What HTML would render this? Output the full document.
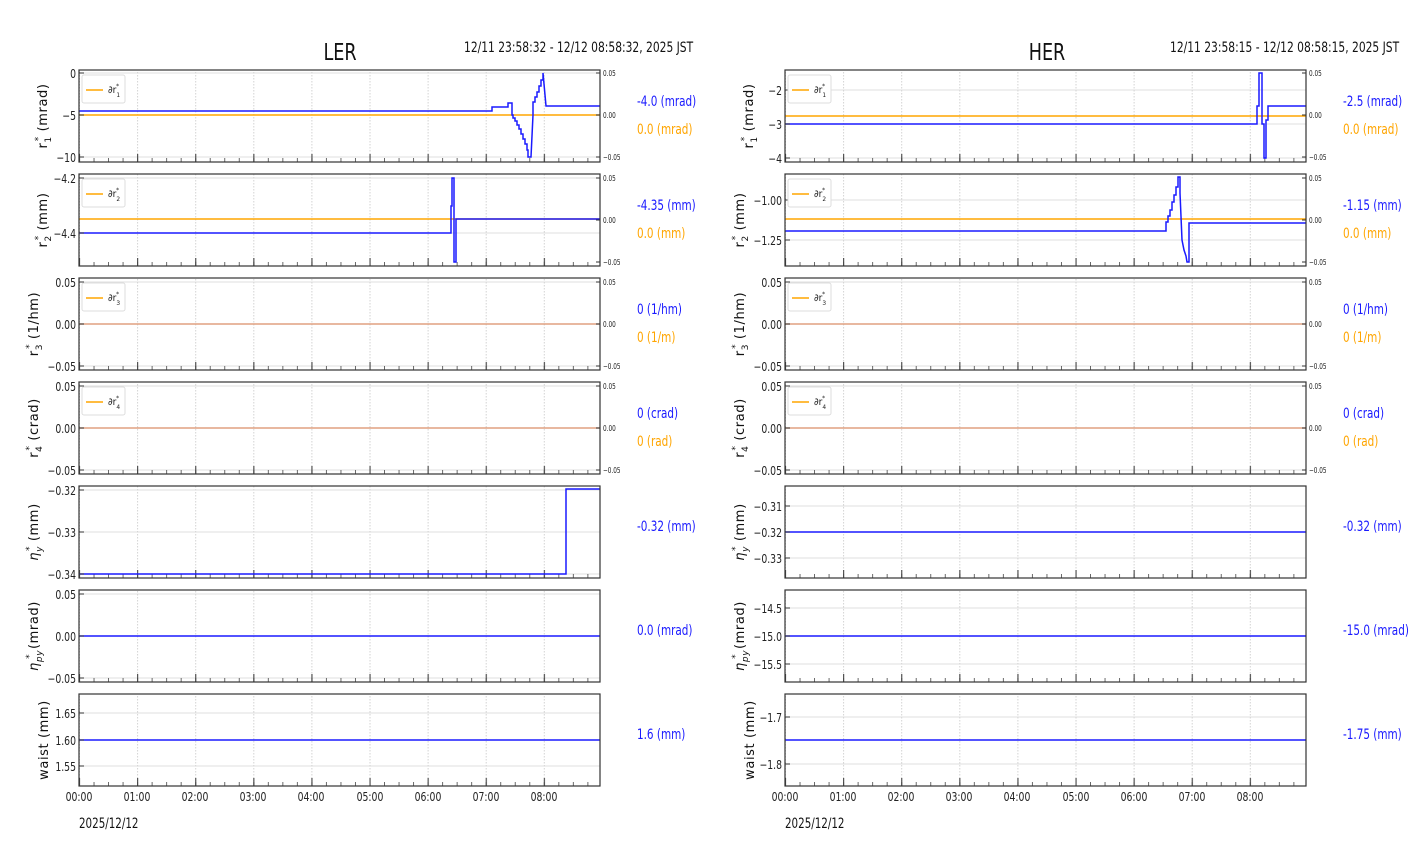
<!DOCTYPE html>
<html><head><meta charset="utf-8"><style>
html,body{margin:0;padding:0;background:#fff;}
svg{display:block;font-family:"DejaVu Sans Condensed","Liberation Sans Narrow","Liberation Sans",sans-serif;}
g.t{font-size:12px;fill:#222;}
g.t>text{transform:scaleX(.86);transform-box:fill-box;transform-origin:right;}
g.tc{font-size:12px;fill:#222;}
g.tc>text{transform:scaleX(.86);transform-box:fill-box;transform-origin:center;}
g.s{font-size:7.5px;fill:#222;}
g.s>text{transform:scaleX(.85);transform-box:fill-box;transform-origin:left;}
.yl{font-family:"DejaVu Sans",sans-serif;font-size:13px;fill:#111;}
.b{font-size:14.5px;fill:#1a1aff;transform:scaleX(.8);transform-box:fill-box;transform-origin:left;}
.o{font-size:14.5px;fill:#ffa500;transform:scaleX(.8);transform-box:fill-box;transform-origin:left;}
.dt{font-size:14px;fill:#111;transform:scaleX(.85);transform-box:fill-box;transform-origin:right;}
.hd{font-size:23px;fill:#111;transform:scaleX(.85);transform-box:fill-box;transform-origin:center;}
.dd{font-size:14px;fill:#111;transform:scaleX(.82);transform-box:fill-box;transform-origin:left;}
</style></head><body>
<svg width="1412" height="864" viewBox="0 0 1412 864" xmlns="http://www.w3.org/2000/svg">
<defs>
<pattern id="gL" x="79" y="0" width="58.1" height="864" patternUnits="userSpaceOnUse"><line x1="0.5" y1="0" x2="0.5" y2="864" stroke="#c8c8c8" stroke-width="0.8" stroke-dasharray="1.5,1.5"/></pattern>
<pattern id="gR" x="785" y="0" width="58.1" height="864" patternUnits="userSpaceOnUse"><line x1="0.5" y1="0" x2="0.5" y2="864" stroke="#c8c8c8" stroke-width="0.8" stroke-dasharray="1.5,1.5"/></pattern>
<pattern id="mjL" x="79" y="70" width="58.1" height="104" patternUnits="userSpaceOnUse"><line x1="0.5" y1="84" x2="0.5" y2="92" stroke="#444" stroke-width="1.2"/></pattern>
<pattern id="mnL" x="79" y="70" width="14.525" height="104" patternUnits="userSpaceOnUse"><line x1="0.5" y1="88" x2="0.5" y2="92" stroke="#444" stroke-width="0.8"/></pattern>
<pattern id="mjR" x="785" y="70" width="58.1" height="104" patternUnits="userSpaceOnUse"><line x1="0.5" y1="84" x2="0.5" y2="92" stroke="#444" stroke-width="1.2"/></pattern>
<pattern id="mnR" x="785" y="70" width="14.525" height="104" patternUnits="userSpaceOnUse"><line x1="0.5" y1="88" x2="0.5" y2="92" stroke="#444" stroke-width="0.8"/></pattern>
</defs>

<g>
<rect x="79" y="70" width="521" height="92" fill="url(#gL)"/><rect x="79" y="174" width="521" height="92" fill="url(#gL)"/><rect x="79" y="278" width="521" height="92" fill="url(#gL)"/><rect x="79" y="382" width="521" height="92" fill="url(#gL)"/><rect x="79" y="486" width="521" height="92" fill="url(#gL)"/><rect x="79" y="590" width="521" height="92" fill="url(#gL)"/><rect x="79" y="694" width="521" height="92" fill="url(#gL)"/>
<rect x="785" y="70" width="521" height="92" fill="url(#gR)"/><rect x="785" y="174" width="521" height="92" fill="url(#gR)"/><rect x="785" y="278" width="521" height="92" fill="url(#gR)"/><rect x="785" y="382" width="521" height="92" fill="url(#gR)"/><rect x="785" y="486" width="521" height="92" fill="url(#gR)"/><rect x="785" y="590" width="521" height="92" fill="url(#gR)"/><rect x="785" y="694" width="521" height="92" fill="url(#gR)"/>
</g>
<g stroke="#d4d4d4" stroke-width="0.8">
<line x1="79" x2="600" y1="73" y2="73"/><line x1="79" x2="600" y1="115" y2="115"/><line x1="79" x2="600" y1="157" y2="157"/>
<line x1="79" x2="600" y1="178" y2="178"/><line x1="79" x2="600" y1="233" y2="233"/>
<line x1="79" x2="600" y1="282" y2="282"/><line x1="79" x2="600" y1="324" y2="324"/><line x1="79" x2="600" y1="366" y2="366"/>
<line x1="79" x2="600" y1="386" y2="386"/><line x1="79" x2="600" y1="428" y2="428"/><line x1="79" x2="600" y1="470" y2="470"/>
<line x1="79" x2="600" y1="490" y2="490"/><line x1="79" x2="600" y1="532" y2="532"/><line x1="79" x2="600" y1="574" y2="574"/>
<line x1="79" x2="600" y1="594" y2="594"/><line x1="79" x2="600" y1="636" y2="636"/><line x1="79" x2="600" y1="678" y2="678"/>
<line x1="79" x2="600" y1="713" y2="713"/><line x1="79" x2="600" y1="740" y2="740"/><line x1="79" x2="600" y1="766" y2="766"/>
<line x1="785" x2="1306" y1="90" y2="90"/><line x1="785" x2="1306" y1="124" y2="124"/><line x1="785" x2="1306" y1="158" y2="158"/>
<line x1="785" x2="1306" y1="200" y2="200"/><line x1="785" x2="1306" y1="240" y2="240"/>
<line x1="785" x2="1306" y1="282" y2="282"/><line x1="785" x2="1306" y1="324" y2="324"/><line x1="785" x2="1306" y1="366" y2="366"/>
<line x1="785" x2="1306" y1="386" y2="386"/><line x1="785" x2="1306" y1="428" y2="428"/><line x1="785" x2="1306" y1="470" y2="470"/>
<line x1="785" x2="1306" y1="506" y2="506"/><line x1="785" x2="1306" y1="532" y2="532"/><line x1="785" x2="1306" y1="558" y2="558"/>
<line x1="785" x2="1306" y1="608" y2="608"/><line x1="785" x2="1306" y1="636" y2="636"/><line x1="785" x2="1306" y1="664" y2="664"/>
<line x1="785" x2="1306" y1="717" y2="717"/><line x1="785" x2="1306" y1="764" y2="764"/>
</g>
<rect x="79" y="70" width="521" height="716" fill="url(#mnL)"/><rect x="79" y="70" width="521" height="716" fill="url(#mjL)"/>
<rect x="785" y="70" width="521" height="716" fill="url(#mnR)"/><rect x="785" y="70" width="521" height="716" fill="url(#mjR)"/>

<g fill="none" stroke-width="1.5">
<line x1="79" x2="600" y1="115" y2="115" stroke="#ffa500"/>
<path d="M79 111H492V107H508V103H512V115H513V118H515V121H517V125H519V129H521V134H523V139H525V144H527V150H528V157H531L533 115V102H535V97H537V92H539V86H541V80H543V73L546 106H600" stroke="#1a1aff"/>
<line x1="79" x2="600" y1="219" y2="219" stroke="#ffa500"/>
<path d="M79 233H451V206H452V178H454V262H456V219H600" stroke="#1a1aff"/>
<line x1="79" x2="600" y1="324" y2="324" stroke="#e0a080"/>
<line x1="79" x2="600" y1="428" y2="428" stroke="#e0a080"/>
<path d="M79 574H566V489H600" stroke="#1a1aff"/>
<line x1="79" x2="600" y1="636" y2="636" stroke="#1a1aff"/>
<line x1="79" x2="600" y1="740" y2="740" stroke="#1a1aff"/>
<line x1="785" x2="1306" y1="116" y2="116" stroke="#ffa500"/>
<path d="M785 124H1257V106H1259V73H1262V124H1264V158H1266V120H1268V106H1306" stroke="#1a1aff"/>
<line x1="785" x2="1306" y1="219" y2="219" stroke="#ffa500"/>
<path d="M785 231H1166V222H1168V216H1170V210H1172V202H1174V195H1176V187H1178V177H1180V193L1182 240L1184 250L1186 256L1187 262H1189V223H1306" stroke="#1a1aff"/>
<line x1="785" x2="1306" y1="324" y2="324" stroke="#e0a080"/>
<line x1="785" x2="1306" y1="428" y2="428" stroke="#e0a080"/>
<line x1="785" x2="1306" y1="532" y2="532" stroke="#1a1aff"/>
<line x1="785" x2="1306" y1="636" y2="636" stroke="#1a1aff"/>
<line x1="785" x2="1306" y1="740" y2="740" stroke="#1a1aff"/>
</g>

<g fill="none" stroke="#333" stroke-width="1.2">
<rect x="79" y="70" width="521" height="92"/><rect x="79" y="174" width="521" height="92"/><rect x="79" y="278" width="521" height="92"/><rect x="79" y="382" width="521" height="92"/><rect x="79" y="486" width="521" height="92"/><rect x="79" y="590" width="521" height="92"/><rect x="79" y="694" width="521" height="92"/>
<rect x="785" y="70" width="521" height="92"/><rect x="785" y="174" width="521" height="92"/><rect x="785" y="278" width="521" height="92"/><rect x="785" y="382" width="521" height="92"/><rect x="785" y="486" width="521" height="92"/><rect x="785" y="590" width="521" height="92"/><rect x="785" y="694" width="521" height="92"/>
</g>
<g stroke="#333" stroke-width="1">
<path d="M79 73h5M79 115h5M79 157h5M79 178h5M79 233h5M79 282h5M79 324h5M79 366h5M79 386h5M79 428h5M79 470h5M79 490h5M79 532h5M79 574h5M79 594h5M79 636h5M79 678h5M79 713h5M79 740h5M79 766h5"/>
<path d="M785 90h5M785 124h5M785 158h5M785 200h5M785 240h5M785 282h5M785 324h5M785 366h5M785 386h5M785 428h5M785 470h5M785 506h5M785 532h5M785 558h5M785 608h5M785 636h5M785 664h5M785 717h5M785 764h5"/>
<path d="M600 73h-4M600 115h-4M600 157h-4M600 178h-4M600 220h-4M600 262h-4M600 282h-4M600 324h-4M600 366h-4M600 386h-4M600 428h-4M600 470h-4"/>
<path d="M1306 73h-4M1306 115h-4M1306 157h-4M1306 178h-4M1306 220h-4M1306 262h-4M1306 282h-4M1306 324h-4M1306 366h-4M1306 386h-4M1306 428h-4M1306 470h-4"/>
</g>

<g fill="#fff" stroke="#ddd" stroke-width="1">
<rect x="82" y="75" width="43" height="28" rx="2"/><rect x="82" y="179" width="43" height="28" rx="2"/><rect x="82" y="283" width="43" height="28" rx="2"/><rect x="82" y="387" width="43" height="28" rx="2"/>
<rect x="788" y="75" width="43" height="28" rx="2"/><rect x="788" y="179" width="43" height="28" rx="2"/><rect x="788" y="283" width="43" height="28" rx="2"/><rect x="788" y="387" width="43" height="28" rx="2"/>
</g>
<g stroke="#ffa500" stroke-width="1.5">
<path d="M86 90h17M86 194h17M86 298h17M86 402h17M792 90h17M792 194h17M792 298h17M792 402h17"/>
</g>
<g font-size="10" fill="#222">
<text x="108" y="93">∂r<tspan font-size="6.5" dy="4">1</tspan><tspan font-size="6.5" dx="-4" dy="-9">*</tspan></text>
<text x="108" y="197">∂r<tspan font-size="6.5" dy="4">2</tspan><tspan font-size="6.5" dx="-4" dy="-9">*</tspan></text>
<text x="108" y="301">∂r<tspan font-size="6.5" dy="4">3</tspan><tspan font-size="6.5" dx="-4" dy="-9">*</tspan></text>
<text x="108" y="405">∂r<tspan font-size="6.5" dy="4">4</tspan><tspan font-size="6.5" dx="-4" dy="-9">*</tspan></text>
<text x="814" y="93">∂r<tspan font-size="6.5" dy="4">1</tspan><tspan font-size="6.5" dx="-4" dy="-9">*</tspan></text>
<text x="814" y="197">∂r<tspan font-size="6.5" dy="4">2</tspan><tspan font-size="6.5" dx="-4" dy="-9">*</tspan></text>
<text x="814" y="301">∂r<tspan font-size="6.5" dy="4">3</tspan><tspan font-size="6.5" dx="-4" dy="-9">*</tspan></text>
<text x="814" y="405">∂r<tspan font-size="6.5" dy="4">4</tspan><tspan font-size="6.5" dx="-4" dy="-9">*</tspan></text>
</g>

<text class="hd" x="340" y="60" text-anchor="middle">LER</text>
<text class="dt" x="693" y="52" text-anchor="end">12/11 23:58:32 - 12/12 08:58:32, 2025 JST</text>
<text class="hd" x="1047" y="60" text-anchor="middle">HER</text>
<text class="dt" x="1399" y="52" text-anchor="end">12/11 23:58:15 - 12/12 08:58:15, 2025 JST</text>

<g class="t" text-anchor="end">
<text x="76" y="78">0</text><text x="76" y="120">−5</text><text x="76" y="162">−10</text>
<text x="76" y="183">−4.2</text><text x="76" y="238">−4.4</text>
<text x="76" y="287">0.05</text><text x="76" y="329">0.00</text><text x="76" y="371">−0.05</text>
<text x="76" y="391">0.05</text><text x="76" y="433">0.00</text><text x="76" y="475">−0.05</text>
<text x="76" y="495">−0.32</text><text x="76" y="537">−0.33</text><text x="76" y="579">−0.34</text>
<text x="76" y="599">0.05</text><text x="76" y="641">0.00</text><text x="76" y="683">−0.05</text>
<text x="76" y="718">1.65</text><text x="76" y="745">1.60</text><text x="76" y="771">1.55</text>
</g>
<g class="t" text-anchor="end">
<text x="782" y="95">−2</text><text x="782" y="129">−3</text><text x="782" y="163">−4</text>
<text x="782" y="205">−1.00</text><text x="782" y="245">−1.25</text>
<text x="782" y="287">0.05</text><text x="782" y="329">0.00</text><text x="782" y="371">−0.05</text>
<text x="782" y="391">0.05</text><text x="782" y="433">0.00</text><text x="782" y="475">−0.05</text>
<text x="782" y="511">−0.31</text><text x="782" y="537">−0.32</text><text x="782" y="563">−0.33</text>
<text x="782" y="613">−14.5</text><text x="782" y="641">−15.0</text><text x="782" y="669">−15.5</text>
<text x="782" y="722">−1.7</text><text x="782" y="769">−1.8</text>
</g>
<g class="s">
<text x="603" y="76">0.05</text><text x="603" y="118">0.00</text><text x="603" y="160">−0.05</text>
<text x="603" y="181">0.05</text><text x="603" y="223">0.00</text><text x="603" y="265">−0.05</text>
<text x="603" y="285">0.05</text><text x="603" y="327">0.00</text><text x="603" y="369">−0.05</text>
<text x="603" y="389">0.05</text><text x="603" y="431">0.00</text><text x="603" y="473">−0.05</text>
<text x="1309" y="76">0.05</text><text x="1309" y="118">0.00</text><text x="1309" y="160">−0.05</text>
<text x="1309" y="181">0.05</text><text x="1309" y="223">0.00</text><text x="1309" y="265">−0.05</text>
<text x="1309" y="285">0.05</text><text x="1309" y="327">0.00</text><text x="1309" y="369">−0.05</text>
<text x="1309" y="389">0.05</text><text x="1309" y="431">0.00</text><text x="1309" y="473">−0.05</text>
</g>

<g class="yl" text-anchor="middle" letter-spacing="0.6">
<text transform="translate(47,116) rotate(-90)">r<tspan font-size="9" dy="4">1</tspan><tspan font-size="9" dx="-5" dy="-10">*</tspan><tspan dy="6"> (mrad)</tspan></text>
<text transform="translate(47,220) rotate(-90)">r<tspan font-size="9" dy="4">2</tspan><tspan font-size="9" dx="-5" dy="-10">*</tspan><tspan dy="6"> (mm)</tspan></text>
<text transform="translate(38,324) rotate(-90)">r<tspan font-size="9" dy="4">3</tspan><tspan font-size="9" dx="-5" dy="-10">*</tspan><tspan dy="6"> (1/hm)</tspan></text>
<text transform="translate(38,428) rotate(-90)">r<tspan font-size="9" dy="4">4</tspan><tspan font-size="9" dx="-5" dy="-10">*</tspan><tspan dy="6"> (crad)</tspan></text>
<text transform="translate(38,532) rotate(-90)"><tspan font-style="italic">η</tspan><tspan font-size="9" font-style="italic" dy="4">y</tspan><tspan font-size="9" dx="-5" dy="-10">*</tspan><tspan dy="6"> (mm)</tspan></text>
<text transform="translate(38,636) rotate(-90)"><tspan font-style="italic">η</tspan><tspan font-size="9" font-style="italic" dy="4">py</tspan><tspan font-size="9" dx="-9" dy="-10">*</tspan><tspan dy="6"> (mrad)</tspan></text>
<text transform="translate(48,740) rotate(-90)">waist (mm)</text>
<text transform="translate(753,116) rotate(-90)">r<tspan font-size="9" dy="4">1</tspan><tspan font-size="9" dx="-5" dy="-10">*</tspan><tspan dy="6"> (mrad)</tspan></text>
<text transform="translate(744,220) rotate(-90)">r<tspan font-size="9" dy="4">2</tspan><tspan font-size="9" dx="-5" dy="-10">*</tspan><tspan dy="6"> (mm)</tspan></text>
<text transform="translate(744,324) rotate(-90)">r<tspan font-size="9" dy="4">3</tspan><tspan font-size="9" dx="-5" dy="-10">*</tspan><tspan dy="6"> (1/hm)</tspan></text>
<text transform="translate(744,428) rotate(-90)">r<tspan font-size="9" dy="4">4</tspan><tspan font-size="9" dx="-5" dy="-10">*</tspan><tspan dy="6"> (crad)</tspan></text>
<text transform="translate(744,532) rotate(-90)"><tspan font-style="italic">η</tspan><tspan font-size="9" font-style="italic" dy="4">y</tspan><tspan font-size="9" dx="-5" dy="-10">*</tspan><tspan dy="6"> (mm)</tspan></text>
<text transform="translate(744,636) rotate(-90)"><tspan font-style="italic">η</tspan><tspan font-size="9" font-style="italic" dy="4">py</tspan><tspan font-size="9" dx="-9" dy="-10">*</tspan><tspan dy="6"> (mrad)</tspan></text>
<text transform="translate(754,740) rotate(-90)">waist (mm)</text>
</g>

<text class="b" x="637" y="106">-4.0 (mrad)</text><text class="o" x="637" y="134">0.0 (mrad)</text>
<text class="b" x="637" y="210">-4.35 (mm)</text><text class="o" x="637" y="238">0.0 (mm)</text>
<text class="b" x="637" y="314">0 (1/hm)</text><text class="o" x="637" y="342">0 (1/m)</text>
<text class="b" x="637" y="418">0 (crad)</text><text class="o" x="637" y="446">0 (rad)</text>
<text class="b" x="637" y="531">-0.32 (mm)</text>
<text class="b" x="637" y="635">0.0 (mrad)</text>
<text class="b" x="637" y="739">1.6 (mm)</text>
<text class="b" x="1343" y="106">-2.5 (mrad)</text><text class="o" x="1343" y="134">0.0 (mrad)</text>
<text class="b" x="1343" y="210">-1.15 (mm)</text><text class="o" x="1343" y="238">0.0 (mm)</text>
<text class="b" x="1343" y="314">0 (1/hm)</text><text class="o" x="1343" y="342">0 (1/m)</text>
<text class="b" x="1343" y="418">0 (crad)</text><text class="o" x="1343" y="446">0 (rad)</text>
<text class="b" x="1343" y="531">-0.32 (mm)</text>
<text class="b" x="1343" y="635">-15.0 (mrad)</text>
<text class="b" x="1343" y="739">-1.75 (mm)</text>

<g class="tc" text-anchor="middle">
<text x="79" y="801">00:00</text><text x="137" y="801">01:00</text><text x="195" y="801">02:00</text><text x="253" y="801">03:00</text><text x="311" y="801">04:00</text><text x="370" y="801">05:00</text><text x="428" y="801">06:00</text><text x="486" y="801">07:00</text><text x="544" y="801">08:00</text>
<text x="785" y="801">00:00</text><text x="843" y="801">01:00</text><text x="901" y="801">02:00</text><text x="959" y="801">03:00</text><text x="1017" y="801">04:00</text><text x="1076" y="801">05:00</text><text x="1134" y="801">06:00</text><text x="1192" y="801">07:00</text><text x="1250" y="801">08:00</text>
</g>
<text class="dd" x="79" y="828">2025/12/12</text>
<text class="dd" x="785" y="828">2025/12/12</text>
</svg>
</body></html>
